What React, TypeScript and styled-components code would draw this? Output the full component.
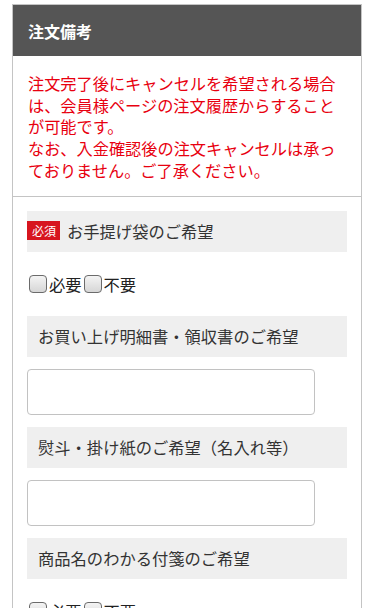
import styled, { createGlobalStyle } from 'styled-components';

const GlobalStyle = createGlobalStyle`
  body {
    margin: 0;
    background: #fff;
    font-family: "Noto Sans CJK JP", "Noto Sans", sans-serif;
  }
`;

const Page = styled.div`
  padding: 4px 12px 0;
`;

const Card = styled.section`
  border: 1px solid #c4c4c4;
  border-bottom: none;
`;

const CardHeader = styled.h2`
  margin: 0;
  height: 51px;
  display: flex;
  align-items: center;
  padding: 0 15px;
  background: #555;
  color: #fff;
  font-size: 16px;
  font-weight: 700;
`;

const Notice = styled.p`
  margin: 0;
  padding: 17px 15px 14px;
  color: #e8000f;
  font-size: 16.2px;
  line-height: 21.7px;
  border-bottom: 1px solid #c4c4c4;
`;

const Form = styled.div`
  display: flex;
  flex-direction: column;
  gap: 12px;
  padding: 14px 14px 20px;
`;

const Label = styled.div<{ $required?: boolean }>`
  display: flex;
  align-items: center;
  gap: 7px;
  height: 41px;
  padding-left: ${({ $required }) => ($required ? '0' : '11px')};
  background: #efefef;
  color: #333;
  font-size: 16.3px;
`;

const Badge = styled.span`
  display: inline-flex;
  align-items: center;
  height: 19px;
  padding: 0 4px 0 5px;
  background: #d7151f;
  color: #fff;
  font-size: 12px;
  margin-bottom: 2px;
`;

const ChoiceRow = styled.div`
  display: flex;
  align-items: center;
  height: 40px;
  padding-left: 2px;
  color: #222;
  font-size: 16.3px;
`;

const Choice = styled.label`
  display: inline-flex;
  align-items: center;
  gap: 2px;
  margin-right: 2px;
`;

const Box = styled.input`
  appearance: none;
  margin: 0;
  width: 18px;
  height: 18px;
  border: 1px solid #6b6b6b;
  border-radius: 4px;
  background: linear-gradient(#f4f4f4, #d6d6d6);
`;

const TextInput = styled.input`
  box-sizing: border-box;
  width: 90%;
  height: 46px;
  border: 1px solid #c2c2c2;
  border-radius: 4px;
  background: #fff;
  font-size: 16px;
`;

const YesNo = () => (
  <ChoiceRow>
    <Choice>
      <Box type="checkbox" />
      必要
    </Choice>
    <Choice>
      <Box type="checkbox" />
      不要
    </Choice>
  </ChoiceRow>
);

const App = () => (
  <Page>
    <GlobalStyle />
    <Card>
      <CardHeader>注文備考</CardHeader>
      <Notice>
        注文完了後にキャンセルを希望される場合は、会員様ページの注文履歴からすることが可能です。
        <br />
        なお、入金確認後の注文キャンセルは承っておりません。ご了承ください。
      </Notice>
      <Form>
        <Label $required>
          <Badge>必須</Badge>
          お手提げ袋のご希望
        </Label>
        <YesNo />
        <Label>お買い上げ明細書・領収書のご希望</Label>
        <TextInput type="text" />
        <Label>熨斗・掛け紙のご希望（名入れ等）</Label>
        <TextInput type="text" />
        <Label>商品名のわかる付箋のご希望</Label>
        <YesNo />
      </Form>
    </Card>
  </Page>
);

export default App;
